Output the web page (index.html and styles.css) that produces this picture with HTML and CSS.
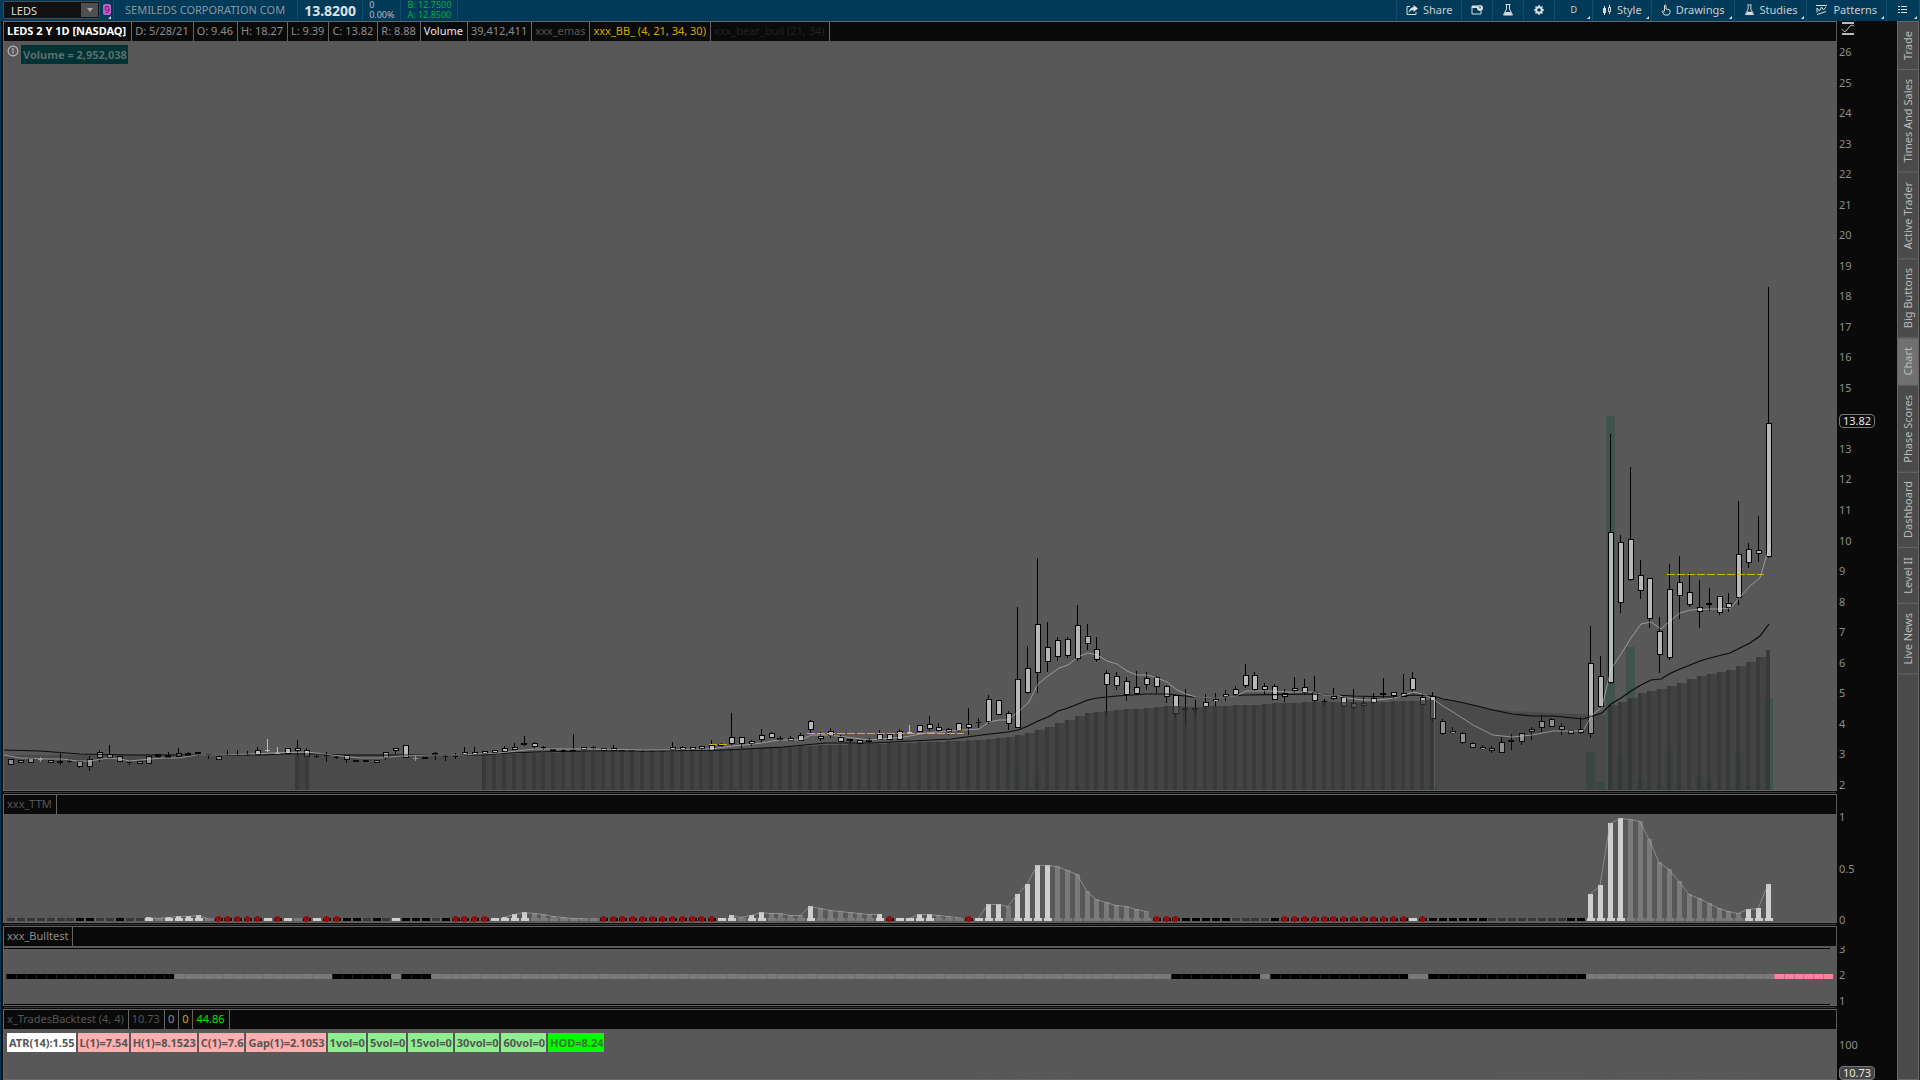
FILE: index.html
```html
<!DOCTYPE html>
<html lang="en">
<head>
    <meta charset="UTF-8">
    <meta name="viewport" content="width=device-width, initial-scale=1.0">
    <title>LEDS Chart</title>
    <link rel="stylesheet" href="styles.css">
</head>
<body>
    <header class="toolbar">
        <div class="symbol-box">
            <input type="text" class="symbol-input" value="LEDS" aria-label="Symbol">
            <button class="symbol-arrow" aria-label="Symbol list"><svg width="6" height="4" viewBox="0 0 6 4"><path d="M0 0h6L3 4z" fill="#aaa"/></svg></button>
        </div>
        <button class="link-badge has-menu" aria-label="Link color"><span>9</span></button>
        <div class="company">SEMILEDS CORPORATION COM</div>
        <div class="last-price">13.8200</div>
        <div class="pair change"><div>0</div><div>0.00%</div></div>
        <div class="pair bid-ask"><div>B: 12.7500</div><div>A: 12.8500</div></div>
        <div class="tools">
            <button class="tool">
                <svg width="12" height="12" viewBox="0 0 12 12"><path d="M4 2.500H1v8h9V8" fill="none" stroke="#ddd"/><path d="M7.500 1L12 4.500 7.500 8V6C5 6 4 7 2.500 9 3 5.500 4.500 3.500 7.500 3z" fill="#ddd"/></svg>
                Share
            </button>
            <button class="tool icon-only" aria-label="Detach">
                <svg width="12" height="12" viewBox="0 0 12 12"><path d="M7 2H1v8h9V7" fill="none" stroke="#ddd"/><path d="M1 3h5" stroke="#ddd" stroke-width="2"/><circle cx="9" cy="4" r="3" fill="#ddd"/><path d="M9 2v2.500" stroke="#003a59"/></svg>
            </button>
            <button class="tool icon-only" aria-label="Edit studies">
                <svg width="12" height="12" viewBox="0 0 12 12"><path d="M3.500.5h5M4.500 1v4L1.500 11h9l-3-6V1" fill="none" stroke="#ddd"/><path d="M3.500 8h5l1.500 3H2z" fill="#ddd"/></svg>
            </button>
            <button class="tool icon-only" aria-label="Settings">
                <svg width="12" height="12" viewBox="0 0 12 12"><circle cx="6" cy="6" r="2.800" fill="none" stroke="#ddd" stroke-width="2"/><path d="M6 1v2M6 9v2M1 6h2M9 6h2M2.500 2.500l1.300 1.300M8.200 8.200l1.300 1.300M2.500 9.500l1.300-1.300M8.200 3.800l1.300-1.300" stroke="#ddd" stroke-width="1.500"/></svg>
            </button>
            <button class="tool period has-menu">D</button>
            <button class="tool has-menu">
                <svg width="10" height="12" viewBox="0 0 10 12"><path d="M2.500 2v9M7.500 1v9" stroke="#ddd"/><path d="M1 4h3v5H1z" fill="#ddd"/><path d="M6.500 3.500h2v4h-2z" fill="#003a59" stroke="#ddd"/></svg>
                Style
            </button>
            <button class="tool has-menu">
                <svg width="10" height="12" viewBox="0 0 10 12"><path d="M3.500 7V1.500q.8-1 1.500 0V5l3.500.8Q9.500 7 9 8.500L7.500 11h-4L1 7.500Q1.500 6 3.500 8" fill="none" stroke="#ddd"/></svg>
                Drawings
            </button>
            <button class="tool has-menu">
                <svg width="11" height="12" viewBox="0 0 12 12"><path d="M3.500.5h5M4.500 1v4L1.500 11h9l-3-6V1" fill="none" stroke="#ddd"/><path d="M3.500 8h5l1.500 3H2z" fill="#ddd"/></svg>
                Studies
            </button>
            <button class="tool has-menu">
                <svg width="12" height="12" viewBox="0 0 12 12"><path d="M0 1.500h11M1 10.500l9-3M1 8.500V4l2.500 3 2-4 2 3L10 3" fill="none" stroke="#ddd"/></svg>
                Patterns
            </button>
            <button class="tool menu has-menu" aria-label="Menu">
                <svg width="10" height="9" viewBox="0 0 10 9"><path d="M0 1.500h2M0 4.500h2M0 7.500h2M3 1.500h6M3 4.500h6M3 7.500h6" stroke="#ddd"/></svg>
            </button>
        </div>
    </header>

    <div class="workspace">
        <main class="panels">
            <section class="panel">
                <div class="panel-body">
                    <div class="strip">
                        <span class="title">LEDS 2 Y 1D [NASDAQ]</span>
                        <span>D: 5/28/21</span>
                        <span>O: 9.46</span>
                        <span>H: 18.27</span>
                        <span>L: 9.39</span>
                        <span>C: 13.82</span>
                        <span>R: 8.88</span>
                        <span class="white">Volume</span>
                        <span>39,412,411</span>
                        <span class="dim">xxx_emas</span>
                        <span class="yellow">xxx_BB_ (4, 21, 34, 30)</span>
                        <span class="faint">xxx_bear_bull (21, 34)</span>
                    </div>
                    <div class="plot">
                        <svg id="priceChart" class="chart" viewBox="4 41 1832 749" preserveAspectRatio="none"></svg>
                        <div class="notes">
                            <svg width="12" height="12" viewBox="0 0 11 11"><circle cx="5.500" cy="5.500" r="4.500" fill="none" stroke="#bbb"/><path d="M5.500 3v5M4.500 3.500h1" stroke="#bbb"/></svg>
                            <span class="volume-label">Volume = 2,952,038</span>
                        </div>
                    </div>
                </div>
                <div class="axis price-axis">
                    <svg class="axis-icon" width="14" height="13" viewBox="0 0 14 13"><path d="M1 1h12M1 12h12" stroke="#bbb" stroke-width="2"/><path d="M1 7q2 4 4 2l4-5q2-2 4 0" fill="none" stroke="#bbb"/></svg>
                    <div class="ticks" id="priceTicks"></div>
                    <span class="price-tag last-tag">13.82</span>
                </div>
            </section>

            <section class="panel">
                <div class="panel-body">
                    <div class="strip"><span class="dim">xxx_TTM</span></div>
                    <div class="plot">
                        <svg id="ttmChart" class="chart" viewBox="4 814 1832 108" preserveAspectRatio="none"></svg>
                    </div>
                </div>
                <div class="axis ttm-axis"><div class="ticks"><span>1</span><span>0.5</span><span>0</span></div></div>
            </section>

            <section class="panel">
                <div class="panel-body">
                    <div class="strip"><span>xxx_Bulltest</span></div>
                    <div class="plot">
                        <svg id="bullChart" class="chart" viewBox="4 946 1832 59" preserveAspectRatio="none"></svg>
                    </div>
                </div>
                <div class="axis bull-axis"><div class="ticks"><span>3</span><span>2</span><span>1</span></div></div>
            </section>

            <section class="panel">
                <div class="panel-body">
                    <div class="strip">
                        <span class="dim">x_TradesBacktest (4, 4)</span>
                        <span class="dim">10.73</span>
                        <span>0</span>
                        <span class="yellow">0</span>
                        <span class="green">44.86</span>
                    </div>
                    <div class="plot">
                        <svg id="testChart" class="chart" viewBox="4 1029 1832 50" preserveAspectRatio="none"></svg>
                        <div class="notes labels">
                            <span class="label label-white">ATR(14):1.55</span>
                            <span class="label label-pink">L(1)=7.54</span>
                            <span class="label label-pink">H(1)=8.1523</span>
                            <span class="label label-pink">C(1)=7.6</span>
                            <span class="label label-pink">Gap(1)=2.1053</span>
                            <span class="label label-green">1vol=0</span>
                            <span class="label label-green">5vol=0</span>
                            <span class="label label-green">15vol=0</span>
                            <span class="label label-green">30vol=0</span>
                            <span class="label label-green">60vol=0</span>
                            <span class="label label-lime">HOD=8.24</span>
                        </div>
                    </div>
                </div>
                <div class="axis test-axis"><div class="ticks"><span>100</span></div><span class="price-tag test-tag">10.73</span></div>
            </section>
        </main>

        <nav class="side-tabs">
            <button>Trade</button>
            <button>Times And Sales</button>
            <button>Active Trader</button>
            <button>Big Buttons</button>
            <button class="active">Chart</button>
            <button>Phase Scores</button>
            <button>Dashboard</button>
            <button>Level II</button>
            <button>Live News</button>
        </nav>
    </div>

    <script src="script.js"></script>
</body>
</html>
```

FILE: styles.css
```css
:root {
    --blue: #003a59;
    --plot: #585858;
    --black: #0a0a0a;
    --line: #666666;
    --text: #8c8c8c;
}

* {
    margin: 0;
    padding: 0;
    box-sizing: border-box;
}

body {
    height: 100vh;
    display: flex;
    flex-direction: column;
    overflow: hidden;
    background-color: var(--blue);
    color: var(--text);
    font-family: "Noto Sans", "Open Sans", sans-serif;
    font-size: 11px;
}

button,
input {
    font: inherit;
    color: inherit;
    background: none;
    border: none;
}

/* Toolbar */
.toolbar {
    height: 21px;
    flex: none;
    display: flex;
    align-items: stretch;
}

.toolbar > div + div,
.company {
    border-right: 1px solid #0f4b6d;
}

.symbol-box {
    display: flex;
    width: 97px;
    height: 18px;
    margin: 1px 0 0 3px;
    border: 1px solid #4a4a4a;
    border-radius: 2px;
    background-color: #111;
}

.symbol-input {
    flex: 1;
    min-width: 0;
    padding-left: 7px;
    color: #ddd;
}

.symbol-arrow {
    width: 17px;
    margin: 1px;
    background-color: #505050;
    display: flex;
    align-items: center;
    justify-content: center;
}

.link-badge {
    width: 14px;
    padding-left: 3px;
    display: flex;
    border-right: 1px solid #0f4b6d;
}

.link-badge span {
    width: 8px;
    height: 11px;
    margin-top: 4px;
    border-radius: 2px;
    background-color: #c45bc8;
    color: #401848;
    font-size: 9px;
    line-height: 11px;
}

.has-menu {
    position: relative;
}

.has-menu::after {
    content: "";
    position: absolute;
    right: 2px;
    bottom: 2px;
    border-left: 3px solid transparent;
    border-bottom: 3px solid #ddd;
}

.company {
    padding: 0 12px 0 11px;
    line-height: 19px;
    color: #8b969c;
}

.last-price {
    padding: 0 6px;
    font-size: 14px;
    font-weight: bold;
    line-height: 21px;
    color: #e0e0e0;
}

.pair {
    padding: 0 6px;
    font-size: 9px;
    line-height: 10px;
}

.change {
    color: #bbb;
}

.bid-ask {
    color: #00b33c;
}

.tools {
    flex: 1;
    display: flex;
    justify-content: flex-end;
}

.tool {
    display: flex;
    align-items: center;
    gap: 5px;
    padding: 0 9px 2px;
    border-left: 1px solid #0f4b6d;
    color: #ccc;
}

.tool svg {
    flex: none;
}

.tool.period {
    padding: 0 15px 2px;
    font-size: 9px;
}

.tool.menu {
    padding: 0 11px 2px;
}

/* Panels */
.workspace {
    flex: 1;
    min-height: 0;
    display: flex;
    padding: 0 1px;
}

.panels {
    flex: 1;
    display: grid;
    grid-template-rows: 770fr 129fr 80fr 71fr;
    gap: 3px;
    padding-left: 2px;
    background-color: var(--black);
}

.panel {
    min-height: 0;
    display: flex;
}

.panel-body {
    flex: 1;
    display: flex;
    flex-direction: column;
    border: 1px solid var(--line);
    border-right-color: var(--plot);
    background-color: var(--plot);
}

.panel + .panel .panel-body {
    position: relative;
}

.panel + .panel .panel-body::before {
    content: "";
    position: absolute;
    left: 0;
    right: 0;
    top: -3px;
    height: 1px;
    background-color: #3a3a3a;
}

.strip {
    flex: none;
    height: 19px;
    display: flex;
    background-color: var(--black);
    line-height: 18px;
    white-space: nowrap;
}

.strip span {
    padding: 0 4px 0 3px;
    border-right: 1px solid var(--line);
}

.strip .title {
    padding: 0 5px 0 3px;
    color: #fff;
    font-weight: bold;
}

.strip .white {
    color: #e8e8e8;
}

.strip .dim {
    color: #555;
}

.strip .faint {
    color: #222;
}

.strip .yellow {
    color: #d9a800;
}

.strip .green {
    color: #00e600;
}

.plot {
    flex: 1;
    min-height: 0;
    position: relative;
}

.chart {
    display: block;
    position: absolute;
    width: 100%;
    height: 100%;
}

.notes {
    position: relative;
    display: flex;
    gap: 2px;
    padding: 4px 3px;
}

.volume-label {
    padding: 0 1px 0 2px;
    background-color: #003333;
    color: #5c6c6c;
    font-weight: bold;
    line-height: 19px;
}

.label {
    padding: 0 1px 0 2px;
    color: #555;
    font-weight: bold;
    line-height: 19px;
}

.label-white {
    background-color: #fff;
}

.label-pink {
    background-color: #ffafaf;
}

.label-green {
    background-color: #90ee90;
}

.label-lime {
    background-color: #00ff00;
    color: #2f7a2f;
}

/* Axes */
.axis {
    width: 60px;
    flex: none;
    position: relative;
    overflow: hidden;
    padding-left: 2px;
    background-color: var(--black);
}

.axis-icon {
    position: absolute;
    left: 4px;
    top: 1px;
}

.ticks {
    height: 100%;
    display: flex;
    flex-direction: column;
    justify-content: space-between;
    line-height: 12px;
}

.price-axis {
    padding-top: 25px;
}

.ttm-axis {
    padding-top: 17px;
    margin-bottom: -3px;
}

.bull-axis {
    margin-top: 20px;
    margin-bottom: -4px;
}

.bull-axis .ticks {
    margin-top: -3px;
}

.test-axis {
    padding-top: 30px;
}

.price-tag {
    position: absolute;
    left: 2px;
    padding: 0 3px;
    border: 1px solid #777;
    border-radius: 4px;
    background-color: var(--black);
    color: #e8e8e8;
    line-height: 12px;
}

.last-tag {
    top: 51%;
}

.test-tag {
    bottom: 0;
    background-color: #444;
}

/* Side tabs */
.side-tabs {
    width: 22px;
    flex: none;
    display: flex;
    flex-direction: column;
    border: 1px solid var(--line);
    background-color: #4a4a4a;
}

.side-tabs button {
    writing-mode: vertical-rl;
    transform: rotate(180deg);
    padding: 9px 0;
    border-top: 1px solid var(--line);
    color: #bbb;
    line-height: 20px;
}

.side-tabs .active {
    background-color: #707070;
}
```

FILE: script.js
```js
const SVG_NS = 'http://www.w3.org/2000/svg';
const barX = i => Math.floor(10.7 + i * 9.875);

function add(svg, tag, attrs) {
    const el = document.createElementNS(SVG_NS, tag);
    for (const key in attrs) el.setAttribute(key, attrs[key]);
    svg.appendChild(el);
}

function rect(svg, x, y, width, height, fill, extra) {
    add(svg, 'rect', { x, y, width, height, fill, 'shape-rendering': 'crispEdges', ...extra });
}

function line(svg, points, stroke, extra) {
    add(svg, 'polyline', { points, fill: 'none', stroke, ...extra });
}

// one candle per bar: high, body top, body bottom, low
// b = solid black body, d = doji, w = light doji
const candles = [
    [759,759,765,765],[760,760,763,763],[758,758,763,763],[757,759,760,762,'w'],[760,760,763,763],
    [753,761,763,765,'b'],[759,761,762,763,'d'],[761,761,767,768],[756,759,767,771],[750,752,758,762],
    [745,754,758,758],[756,756,762,762],[761,762,763,765,'d'],[761,761,764,764],[756,756,764,764],
    [754,754,757,758,'b'],[752,755,758,758,'b'],[748,753,757,757],[752,753,756,756,'b'],[752,752,754,756,'b'],
    [754,754,755,759,'d'],[756,756,760,760],[750,754,755,756,'d'],[750,754,755,756,'d'],[751,754,755,756,'d'],
    [747,750,755,755],[739,750,751,752,'w'],[747,753,754,754,'w'],[748,748,754,754],[740,748,751,755],
    [748,750,757,757],[755,756,757,758,'d'],[752,755,756,762,'d'],[756,757,758,759,'d'],[755,755,760,763],
    [760,760,762,762,'b'],[760,760,762,762,'b'],[760,760,763,763],[752,752,758,760],[748,748,751,754],
    [745,745,758,758],[755,758,759,761,'w'],[757,757,759,759,'b'],[752,753,755,760,'b'],[754,756,757,761,'d'],
    [753,756,757,759,'d'],[747,752,755,755],[747,752,755,755],[751,751,754,754],[750,750,753,753],
    [746,748,752,752],[743,747,750,750],[736,743,745,746,'b'],[742,743,747,749],[746,747,748,750,'d'],
    [749,749,751,751,'b'],[749,750,751,752,'d'],[734,750,751,752,'b'],[747,747,750,750],[746,747,748,750,'d'],
    [748,748,751,751],[745,748,751,751],[750,750,751,751,'b'],[750,750,751,751,'b'],[750,751,752,752,'b'],
    [751,751,752,752,'b'],[751,751,752,752,'b'],[742,747,750,750],[746,747,750,750],[747,747,750,750],
    [746,746,749,750],[740,745,751,751],[743,744,746,747,'b'],[713,737,744,745],[737,737,744,748],
    [740,741,744,746],[729,735,740,743],[732,733,738,738],[736,738,740,741,'b'],[736,738,741,741],
    [733,735,741,741],[720,721,730,733],[732,736,739,741],[728,731,736,738],[735,737,742,742],
    [739,739,741,743,'b'],[740,740,744,744],[738,740,742,743,'b'],[730,734,740,740],[734,734,740,740],
    [729,731,740,740],[725,732,733,734,'w'],[725,725,732,732],[716,724,729,731],[723,727,731,732],
    [728,729,732,735],[723,723,731,732],[708,724,728,735],[718,722,723,728,'d'],[695,699,722,724],
    [700,700,715,715],[711,713,724,730],[607,679,728,728],[646,668,693,694],[558,624,673,693],
    [622,647,662,672],[637,640,657,661],[637,639,656,658],[605,625,659,661],[624,636,644,650],
    [637,649,660,662],[670,673,685,717],[672,676,686,690],[677,681,695,701],[671,687,694,695],
    [672,678,685,690],[676,677,687,693],[685,686,697,703],[695,695,714,718],[689,708,710,725,'b'],
    [700,708,710,717,'b'],[694,702,707,709],[693,699,701,706],[690,694,697,701],[686,689,695,696],
    [664,675,686,688],[672,675,690,691],[683,686,690,694],[684,686,700,700],[689,693,697,702],
    [677,688,691,693],[679,687,693,695],[676,692,701,702],[699,701,702,706,'d'],[688,696,699,700],
    [695,697,707,707],[689,703,708,709],[697,703,706,707],[693,698,703,704],[678,693,695,698,'b'],
    [692,692,696,699],[674,693,697,697],[672,678,690,692],[693,697,705,705],[692,696,719,722],
    [719,721,734,735],[727,731,733,734],[732,733,743,744],[742,743,748,748],[745,747,749,750],
    [746,748,751,753],[737,742,753,753],[734,740,742,750,'b'],[733,733,742,745],[727,729,732,740],
    [715,721,728,732],[718,719,727,727],[723,726,730,735],[730,730,734,734],[717,729,733,734],
    [626,663,734,738],[656,676,707,708],[434,532,683,684],[535,542,603,613],[467,539,580,581],
    [560,575,591,599],[578,578,619,628],[617,631,655,673],[564,589,658,660],[556,582,596,619],
    [573,592,605,607],[580,607,612,628],[588,603,605,611,'b'],[596,596,613,615],[593,603,608,612],
    [501,554,598,605],[543,549,563,568],[516,550,554,562],[287,423,557,558]
];

const slowLine = '4,750 40,751 80,754 131,755 261,755 286,754 318,754 347,755 482,755 510,753 535,752 592,751 640,751 726,750 783,747 826,743 872,743 951,739 990,734 1008,732 1018,730 1028,726 1038,721 1048,717 1058,711 1068,708 1078,704 1088,700 1097,698 1117,696 1147,694 1167,694 1193,697 1215,698 1227,697 1243,695 1317,694 1353,696 1393,697 1413,695 1433,696 1443,699 1455,701 1473,705 1493,710 1512,714 1532,716 1553,716 1583,719 1602,713 1611,704 1621,698 1631,691 1641,685 1651,680 1661,679 1671,673 1680,669 1690,665 1700,661 1710,658 1730,653 1750,643 1760,636 1769,624';

const fastLine = '4,755 20,758 50,759 63,759 77,761 90,761 108,758 120,759 130,761 150,759 163,758 177,758 197,755 217,755 253,754 273,753 307,752 333,755 360,758 380,758 400,756 433,755 461,755 498,753 535,749 592,749 640,750 661,750 711,749 732,746 744,745 761,743 779,740 801,740 811,735 829,735 854,738 869,740 904,737 926,733 949,731 979,729 989,722 999,720 1008,720 1018,712 1029,702 1038,684 1048,676 1059,668 1068,665 1078,657 1088,653 1097,655 1107,661 1117,664 1127,671 1137,675 1147,675 1157,678 1167,682 1177,690 1186,694 1196,697 1215,698 1227,697 1236,696 1246,691 1270,691 1287,692 1313,692 1325,695 1337,695 1347,698 1363,700 1377,700 1395,698 1413,692 1423,694 1433,699 1443,706 1453,712 1473,725 1493,735 1512,737 1532,735 1553,731 1583,731 1592,715 1602,707 1611,669 1621,654 1631,638 1641,624 1651,622 1661,629 1671,620 1680,613 1690,610 1710,609 1720,609 1731,608 1740,597 1750,586 1760,578 1770,544';

// top edge of the shaded area, x and y
const shadeTop = [[4,755],[483,755],[532,753],[640,751],[744,749],[826,745],[904,743],[961,741],[1010,737],[1018,735],[1028,733],[1038,730],[1048,727],[1058,723],[1068,720],[1078,716],[1088,713],[1097,712],[1117,710],[1147,708],[1167,706],[1193,707],[1215,706],[1247,705],[1277,703],[1313,702],[1373,702],[1393,701],[1435,700],[1606,706],[1611,705],[1621,702],[1631,697],[1641,693],[1651,690],[1661,689],[1671,685],[1681,682],[1690,679],[1700,676],[1710,674],[1720,672],[1730,669],[1740,665],[1750,661],[1760,656],[1769,649]];

const volume = { 73: 788, 102: 767, 103: 787, 104: 775, 105: 787, 108: 786, 144: 787, 160: 752, 161: 782, 162: 416, 163: 757, 164: 647, 165: 781, 166: 787, 167: 785, 168: 751, 169: 782, 170: 789, 171: 776, 172: 781, 173: 789, 174: 789, 175: 753, 176: 786, 177: 784, 178: 698 };

function shadeAt(x) {
    for (let k = 1; k < shadeTop.length; k++) {
        const [x1, y1] = shadeTop[k - 1];
        const [x2, y2] = shadeTop[k];
        if (x <= x2) return Math.round(y1 + (y2 - y1) * (x - x1) / (x2 - x1));
    }
    return 649;
}

function drawPrice() {
    const svg = document.getElementById('priceChart');

    for (const i in volume) {
        rect(svg, barX(+i) - 4, volume[i], 9, 790 - volume[i], '#40534f');
    }

    candles.forEach(([high, top, bottom, low, kind], i) => {
        const x = barX(i);
        const color = kind === 'w' ? '#bbb' : '#000';
        rect(svg, x, high, 1, low - high, color);
        if (kind) {
            rect(svg, x - (kind === 'b' ? 3 : 2), top, kind === 'b' ? 6 : 5, bottom - top, color);
        } else {
            rect(svg, x - 2, top, 6, bottom - top, '#000');
            rect(svg, x - 1, top + 1, 4, Math.max(1, bottom - top - 2), '#b8b8b8');
        }
    });

    // light cloud on the left and between the two striped ranges
    const cloud = { fill: '#292929', 'fill-opacity': 0.28 };
    add(svg, 'polygon', { points: '4,755 483,755 483,790 4,790', ...cloud });
    add(svg, 'polygon', { points: '1435,699 1455,701 1473,705 1493,709 1510,711 1533,712 1553,713 1606,715 1606,790 1435,790', ...cloud });

    for (let i = 48; i <= 178; i++) {
        if (i > 144 && i < 162) continue;
        const x = barX(i);
        const top = shadeAt(x);
        const next = barX(i + 1) - 2;
        rect(svg, x - 2, top, 4, 790 - top, '#303030', { 'fill-opacity': 0.75 });
        if (i !== 144 && i !== 178) rect(svg, x + 2, top, next - x - 2, 790 - top, '#3c3c3c', { 'fill-opacity': 0.75 });
    }
    rect(svg, 295, 755, 4, 35, '#303030', { 'fill-opacity': 0.6 });
    rect(svg, 299, 755, 6, 35, '#3c3c3c', { 'fill-opacity': 0.5 });
    rect(svg, 305, 755, 4, 35, '#303030', { 'fill-opacity': 0.6 });

    line(svg, slowLine, '#0a0a0a', { 'stroke-width': 1.2 });
    line(svg, fastLine, '#ddd', { 'stroke-opacity': 0.5 });

    const dash = { 'stroke-dasharray': '8 2', 'shape-rendering': 'crispEdges' };
    line(svg, '709,744.5 727,744.5', '#d8b400', dash);
    line(svg, '807,733.5 964,733.5', '#d8b400', dash);
    line(svg, '1667,574.5 1764,574.5', '#d8b400', dash);
}

// d = dark, k = black, r = black with red dot, w = light, g = grey
const ttmStates =
    'd'.repeat(7) + 'kkddkddwgwwwwgrrrrrwrwgrwrrkkdkdwkkkdkrrrrww' + 'wwggggggg' +
    'r'.repeat(12) + 'wwgwwggggwggggggwrwwwwgggrwwwgwwww' + 'g'.repeat(10) +
    'rrrkkkkkddddk' + 'r'.repeat(13) + 'wrkkkkkkddddddddkk' + 'wwww' + 'g'.repeat(12) + 'www';

const ttmTops = { 14: 917, 15: 918, 16: 917, 17: 916, 18: 916, 19: 915, 20: 918, 50: 917, 51: 914, 52: 912, 53: 913, 54: 914, 55: 916, 56: 917, 57: 918, 58: 918, 73: 915, 74: 917, 75: 915, 76: 912, 77: 913, 78: 913, 79: 915, 80: 915, 81: 906, 82: 908, 83: 910, 84: 911, 85: 912, 86: 913, 87: 914, 88: 914, 91: 918, 92: 914, 93: 914, 94: 915, 95: 916, 96: 917, 98: 918, 99: 904, 100: 904, 101: 906, 102: 894, 103: 884, 104: 865, 105: 865, 106: 866, 107: 870, 108: 874, 109: 891, 110: 899, 111: 902, 112: 905, 113: 906, 114: 909, 115: 911, 160: 894, 161: 885, 162: 823, 163: 818, 164: 819, 165: 821, 166: 839, 167: 862, 168: 869, 169: 881, 170: 894, 171: 898, 172: 903, 173: 908, 174: 911, 175: 913, 176: 909, 177: 908, 178: 884 };

function drawTtm() {
    const svg = document.getElementById('ttmChart');
    const colors = { d: '#383838', k: '#000', r: '#000', w: '#cfcfcf', g: '#7a7a7a' };
    rect(svg, 7, 918, 1767, 3, '#626262');

    let run = [];
    const flush = () => {
        if (run.length > 1) line(svg, run.join(' '), '#aaa', { 'stroke-opacity': 0.6 });
        run = [];
    };

    for (let i = 0; i < candles.length; i++) {
        const x = barX(i);
        const state = ttmStates[i];
        rect(svg, x - 3, 918, 8, 3, colors[state]);
        if (state === 'r') add(svg, 'circle', { cx: x + 0.5, cy: 919, r: 3, fill: '#960c0c' });
        if (ttmTops[i]) {
            rect(svg, x - 2, ttmTops[i], 5, 921 - ttmTops[i], colors[state]);
            run.push(`${x},${ttmTops[i] + 0.5}`);
        } else {
            flush();
        }
    }
    flush();
}

function drawBull() {
    const svg = document.getElementById('bullChart');
    // last bar of each run and its colour
    const runs = [[16, '#000'], [32, '#7a7a7a'], [38, '#000'], [39, '#7a7a7a'], [42, '#000'], [117, '#7a7a7a'], [126, '#000'], [127, '#7a7a7a'], [141, '#000'], [143, '#7a7a7a'], [159, '#000'], [178, '#7a7a7a'], [184, '#ff7f9f']];
    rect(svg, 4, 948, 1826, 1, '#000');
    rect(svg, 4, 1004, 1826, 1, '#000');
    let i = 0;
    for (const [last, color] of runs) {
        for (; i <= last; i++) {
            rect(svg, barX(i) - 4, 974, 10, 5, color);
            rect(svg, barX(i) - 4, 974, 1, 5, '#585858', { 'fill-opacity': 0.35 });
        }
    }
}

function drawTest() {
    const svg = document.getElementById('testChart');
    line(svg, '1500,1077 1580,1077 1592,1061 1602,1074 1611,1052 1622,1076 1660,1077 1671,1069 1682,1077 1740,1072 1755,1077 1768,1062', '#566054', { 'stroke-dasharray': '2 2' });
    line(svg, '980,1077 1008,1068 1018,1076 1048,1071 1068,1077', '#566054', { 'stroke-dasharray': '2 2' });
}

const ticks = document.getElementById('priceTicks');
for (let p = 26; p >= 2; p--) {
    const span = document.createElement('span');
    span.textContent = p;
    ticks.appendChild(span);
}

drawPrice();
drawTtm();
drawBull();
drawTest();
```
